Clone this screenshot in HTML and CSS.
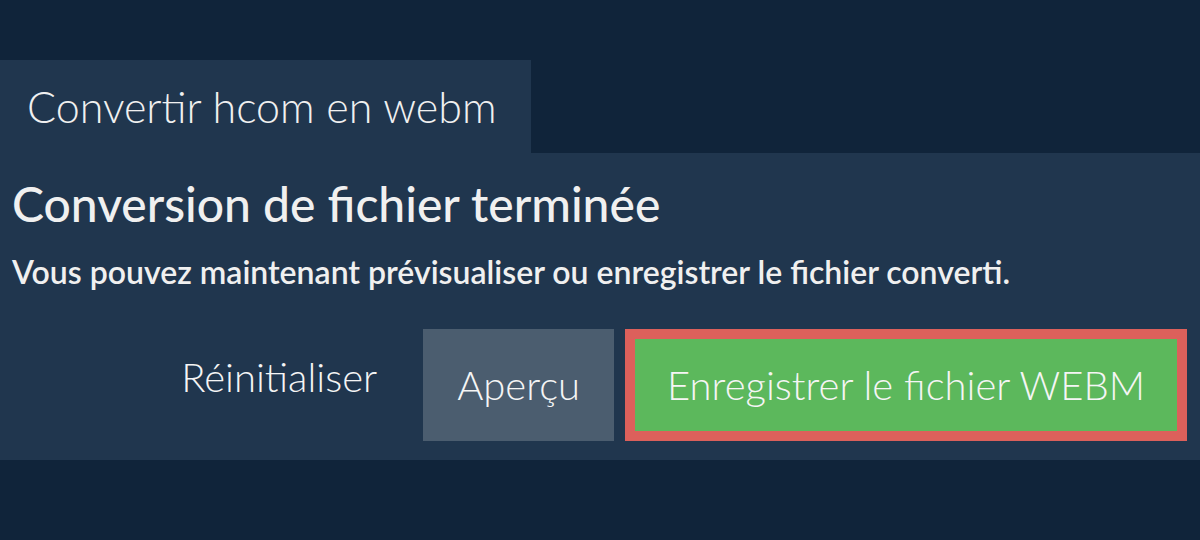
FILE: index.html
```html
<!DOCTYPE html>
<html lang="fr">
<head>
    <meta charset="UTF-8">
    <meta name="viewport" content="width=device-width, initial-scale=1.0">
    <title>Convertir hcom en webm</title>
    <link rel="stylesheet" href="styles.css">
</head>
<body>

    <div class="tabs">
        <div class="tab">Convertir hcom en webm</div>
    </div>

    <div class="panel">
        <h2>Conversion de fichier terminée</h2>
        <p class="info">Vous pouvez maintenant prévisualiser ou enregistrer le fichier converti.</p>

        <div class="actions">
            <button class="btn btn-link">Réinitialiser</button>
            <button class="btn btn-grey">Aperçu</button>
            <button class="btn btn-save">Enregistrer le fichier WEBM</button>
        </div>
    </div>

</body>
</html>
```

FILE: styles.css
```css
body {
    font-family: 'Lato', 'Noto Sans', sans-serif;
    background: #10243a;
    color: #f0f0f0;
    margin: 0;
    padding-top: 60px;
}

.tabs {
    display: flex;
}

.tab {
    background: #20364e;
    width: 531px;
    height: 93px;
    box-sizing: border-box;
    padding: 0 27px;
    display: flex;
    align-items: center;
    font-size: 43px;
    font-weight: 300;
}

.panel {
    background: #20364e;
    padding: 22px 13px 19px 12px;
}

h2 {
    margin: 0;
    font-size: 48px;
    font-weight: 500;
    line-height: 58px;
}

.info {
    margin: 20px 0 0;
    font-size: 32px;
    font-weight: 600;
    line-height: 38px;
}

.actions {
    display: flex;
    justify-content: flex-end;
    align-items: center;
    gap: 11px;
    margin-top: 38px;
}

.btn {
    font-family: inherit;
    font-size: 40px;
    font-weight: 300;
    color: #f5f5f5;
    border: none;
    height: 112px;
    padding: 0 34px;
    cursor: pointer;
}

.btn-link {
    background: transparent;
    padding: 0 35px 0 0;
    height: auto;
    margin-top: -16px;
}

.btn-grey {
    background: #4b5d6f;
}

.btn-save {
    background: #5cb85c;
    border: 10px solid #dc605b;
    padding: 0 32px;
}
```
